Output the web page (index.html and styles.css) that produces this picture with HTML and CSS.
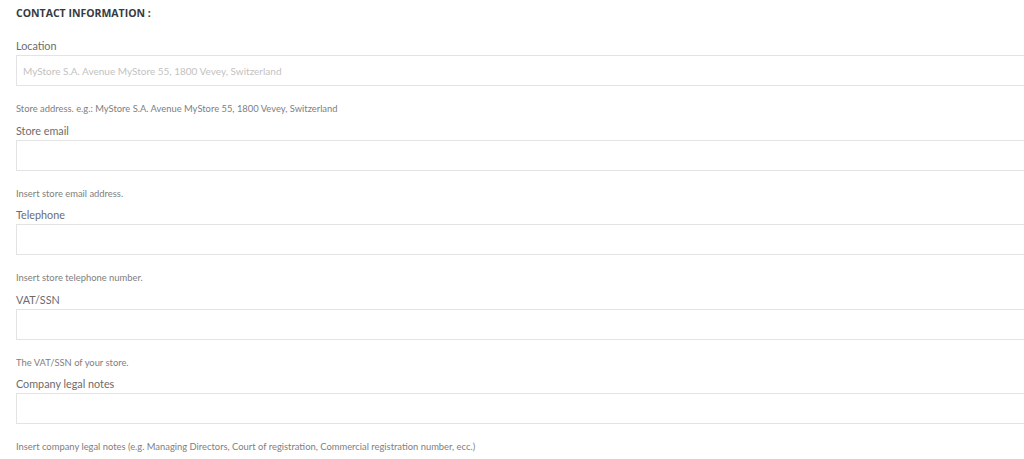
FILE: index.html
```html
<!DOCTYPE html>
<html>
<head>
<meta charset="utf-8">
<link rel="stylesheet" href="styles.css">
</head>
<body>
<div class="page">
  <h3 class="section-title">CONTACT INFORMATION :</h3>
  <div class="field">
    <label class="field-label">Location</label>
    <input class="field-input" type="text" placeholder="MyStore S.A. Avenue MyStore 55, 1800 Vevey, Switzerland">
    <p class="field-help">Store address. e.g.: MyStore S.A. Avenue MyStore 55, 1800 Vevey, Switzerland</p>
  </div>
  <div class="field">
    <label class="field-label">Store email</label>
    <input class="field-input" type="text">
    <p class="field-help">Insert store email address.</p>
  </div>
  <div class="field">
    <label class="field-label">Telephone</label>
    <input class="field-input" type="text">
    <p class="field-help">Insert store telephone number.</p>
  </div>
  <div class="field">
    <label class="field-label">VAT/SSN</label>
    <input class="field-input" type="text">
    <p class="field-help">The VAT/SSN of your store.</p>
  </div>
  <div class="field">
    <label class="field-label">Company legal notes</label>
    <input class="field-input" type="text">
    <p class="field-help">Insert company legal notes (e.g. Managing Directors, Court of registration, Commercial registration number, ecc.)</p>
  </div>
</div>
</body>
</html>
```
FILE: styles.css
```css
html, body {
  margin: 0;
  padding: 0;
  background: #ffffff;
  overflow: hidden;
}
.page {
  padding: 5px 0 0 16px;
  margin-right: -20px;
  font-family: Lato, "Open Sans", sans-serif;
}
.section-title {
  margin: 0 0 15px 0;
  font-family: "Open Sans", sans-serif;
  font-size: 10.5px;
  font-weight: 700;
  line-height: 17px;
  color: #363a41;
}
.field {
  display: flex;
  flex-direction: column;
  margin-bottom: 5.5px;
}
.field-label {
  font-size: 10.8px;
  line-height: 17px;
  color: #6b6b6b;
  margin-bottom: 1px;
}
.field-input {
  box-sizing: border-box;
  height: 31px;
  width: 100%;
  margin: 0;
  border: 1px solid #e3e3e3;
  border-radius: 0;
  padding: 0 6px;
  font-family: Lato, "Open Sans", sans-serif;
  font-size: 10px;
  color: #555;
  outline: none;
}
.field-input::placeholder {
  color: #c2c2c2;
}
.field-help {
  margin: 16px 0 0 0;
  font-size: 9.4px;
  line-height: 14px;
  color: #808080;
}
```
